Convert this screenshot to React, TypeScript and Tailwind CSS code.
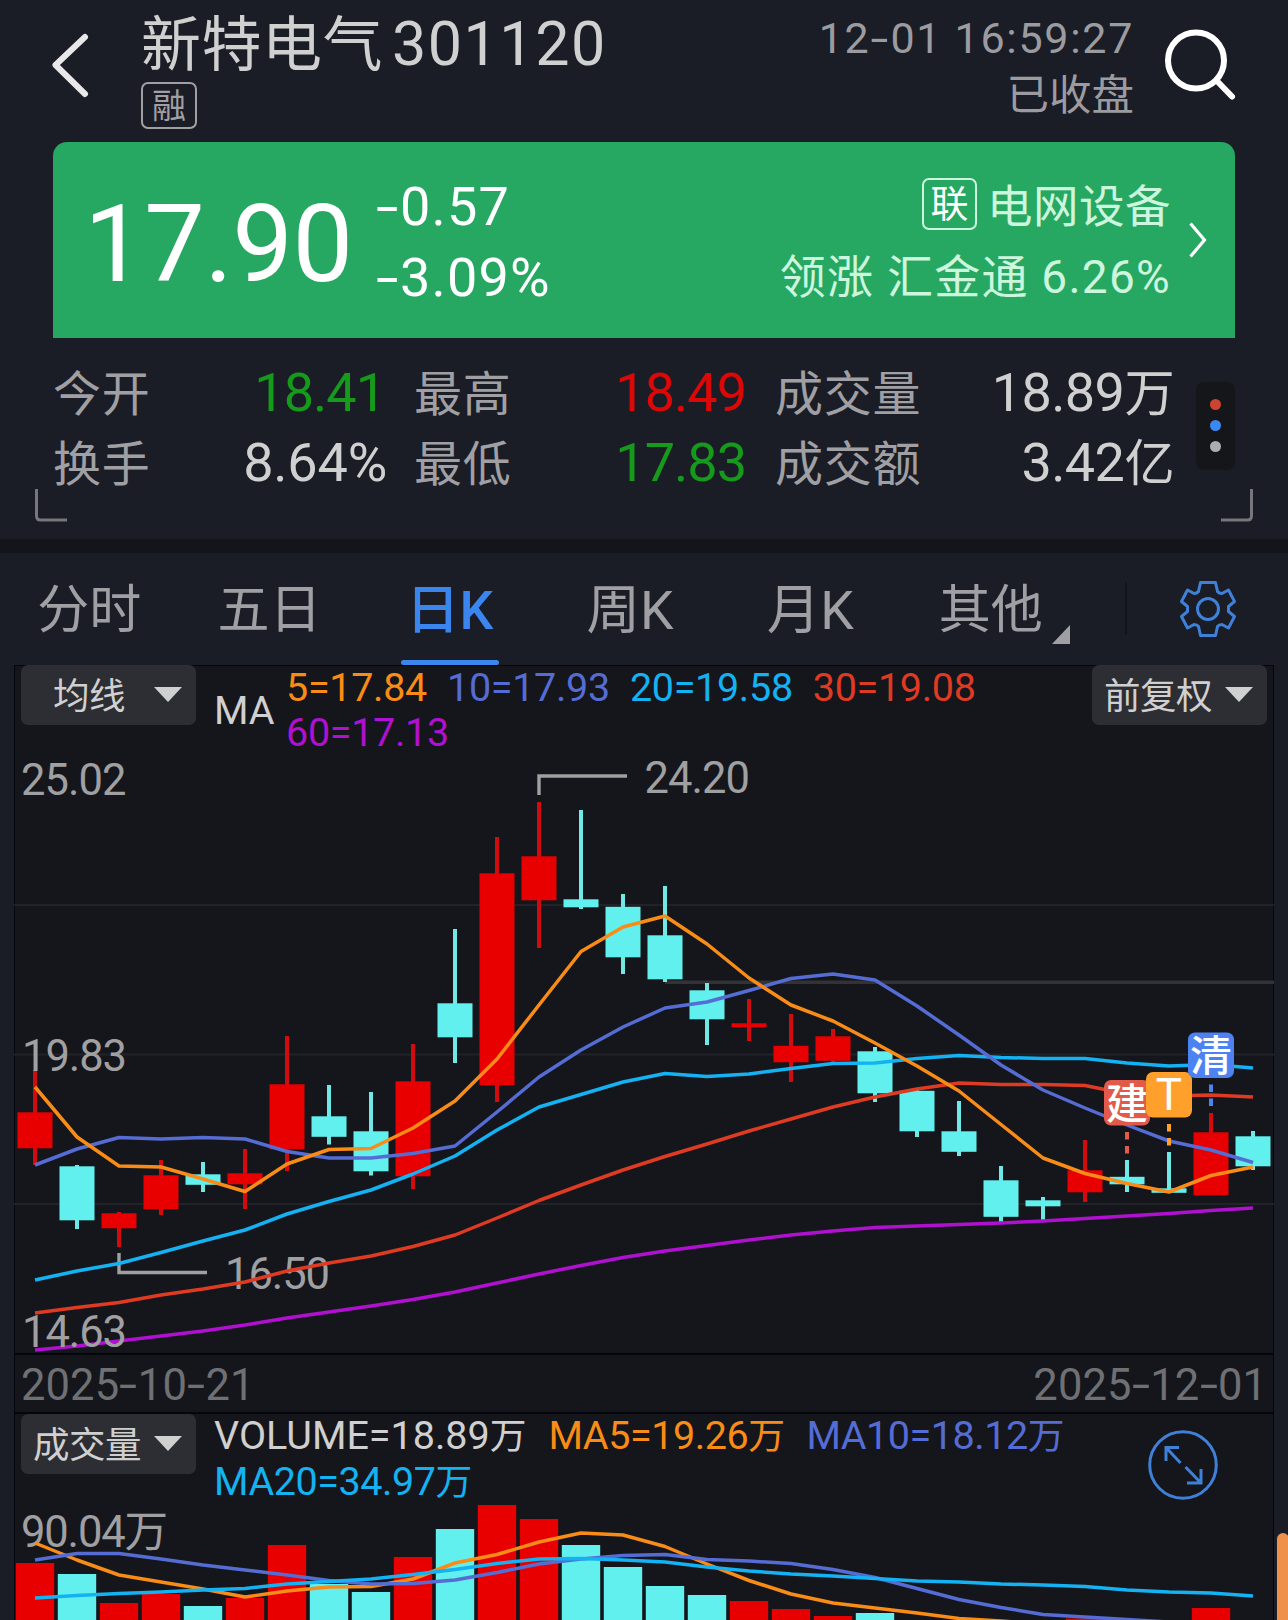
import React from "react";

type Candle = { up: boolean; high: number; top: number; bottom: number; low: number };

const c = (up: boolean, high: number, top: number, bottom: number, low: number): Candle => ({ up, high, top, bottom, low });

const RED = "#e80000";
const CYAN = "#62f0ee";

const candles: Candle[] = [
  c(true, 1070, 1112, 1148, 1165),
  c(false, 1165, 1166, 1220, 1229),
  c(true, 1212, 1213, 1228, 1247),
  c(true, 1160, 1175, 1209, 1215),
  c(false, 1162, 1174, 1184.5, 1192),
  c(true, 1149, 1173, 1184, 1209),
  c(true, 1036, 1084, 1149, 1171),
  c(false, 1085, 1116, 1136.5, 1144.5),
  c(false, 1092, 1131, 1171, 1175.5),
  c(true, 1044, 1081, 1176, 1189),
  c(false, 929, 1003, 1037, 1063),
  c(true, 837, 873, 1085, 1102),
  c(true, 802, 856, 900, 948),
  c(false, 810, 899, 907, 909),
  c(false, 894, 906.5, 957, 974),
  c(false, 886, 935, 979, 982),
  c(false, 983, 990, 1019, 1045),
  c(true, 999, 1023, 1027, 1041),
  c(true, 1014, 1045.5, 1062, 1082),
  c(true, 1029, 1036, 1060.5, 1063),
  c(false, 1047, 1051, 1093, 1102),
  c(false, 1090, 1090.5, 1131, 1137),
  c(false, 1101, 1131, 1151.5, 1156),
  c(false, 1166, 1180, 1216.5, 1222),
  c(false, 1197, 1200, 1206, 1220),
  c(true, 1140, 1170, 1192, 1202),
  c(false, 1160, 1176.5, 1184, 1192),
  c(false, 1152, 1188, 1192.5, 1192.5),
  c(true, 1113, 1132, 1195, 1195),
  c(false, 1131, 1136, 1166, 1170),
];

const ma5 = [1087, 1137, 1166, 1167, 1179, 1191.5, 1164, 1149.5, 1148.5, 1128, 1101, 1059, 1005, 951.5, 927, 916, 944, 978, 1005, 1021, 1043, 1066, 1091, 1124.5, 1158, 1173.5, 1183.5, 1192, 1175.5, 1167];
const ma10 = [1165, 1149, 1137.5, 1139, 1137.5, 1139, 1151.5, 1158, 1158, 1153.5, 1146, 1112, 1077, 1050, 1027, 1008, 1002, 990.5, 978.5, 974, 980, 1006, 1035, 1065, 1090, 1108, 1125, 1141, 1150, 1162.5];
const ma20 = [1280, 1271, 1263.5, 1252.5, 1241, 1230, 1214, 1201.5, 1190, 1174, 1156, 1130, 1107, 1094.5, 1082, 1073.5, 1076.5, 1074, 1068.5, 1063.5, 1063, 1058.5, 1055.5, 1057.5, 1058.5, 1058.5, 1063, 1066, 1064.5, 1068];
const ma30 = [1313, 1307.5, 1302.5, 1295, 1289, 1282, 1271, 1263, 1256, 1246.5, 1235, 1218, 1200.5, 1185, 1170, 1156.5, 1144, 1131, 1119, 1107, 1097, 1089, 1083, 1084.5, 1084.5, 1085.5, 1094, 1096, 1095, 1097];
const ma60 = [1350, 1346, 1341, 1336, 1331, 1325, 1318, 1312, 1306, 1299.5, 1292, 1283, 1274, 1265.5, 1257.5, 1251, 1245.5, 1240, 1235, 1231, 1227.5, 1226, 1224.5, 1223, 1221, 1218.5, 1216, 1213.5, 1210.5, 1208];

const volumeTops = [1563, 1574, 1603, 1594, 1606, 1598, 1545, 1584, 1592, 1557, 1529, 1505, 1519, 1545, 1567, 1586, 1595, 1601, 1609, 1616, 1613, 1622, 1622, 1622, 1622, 1618.5, 1622, 1622, 1608, 1622];
const vol5 = [1543, 1560, 1575, 1582, 1589, 1597, 1591, 1587, 1586.5, 1579, 1563, 1554.5, 1542, 1533, 1535, 1546.5, 1564, 1580.5, 1594, 1603, 1608, 1613, 1618.5, 1621, 1624];
const vol10 = [1560, 1553.5, 1553.5, 1559, 1565, 1570, 1575, 1580.5, 1584, 1583.5, 1580, 1572.5, 1564, 1559, 1555.5, 1554.5, 1559.5, 1561, 1563.5, 1569.5, 1577.5, 1588.5, 1599.5, 1607.5, 1614.5, 1617, 1619.5, 1622];
const vol20 = [1598, 1595.5, 1593.5, 1592, 1590, 1588.5, 1584, 1581.5, 1579, 1574.5, 1569.5, 1563.5, 1559, 1558.5, 1560, 1562, 1567, 1571, 1574, 1576, 1578.5, 1581, 1582, 1584, 1585, 1586.5, 1590, 1592, 1593, 1596];

const xAt = (i: number) => 35 + 42 * i;

function Line({ ys, color }: { ys: number[]; color: string }) {
  return <polyline points={ys.map((y, i) => `${xAt(i)},${y}`).join(" ")} fill="none" stroke={color} strokeWidth={3.5} strokeLinejoin="round" />;
}

function Label({ x, y, w, children, fill = "#a0a0a2", size = 43.5 }: { x: number; y: number; w: number; children: string; fill?: string; size?: number }) {
  return (
    <text x={x} y={y} textLength={w} lengthAdjust="spacing" fontSize={size} fill={fill}>
      {children}
    </text>
  );
}

function Marker({ x, y, color, text }: { x: number; y: number; color: string; text: string }) {
  return (
    <g>
      <rect x={x - 23} y={y} width={46} height={45.5} rx={7} fill={color} />
      <text x={x} y={text === "T" ? y + 38 : y + 38.5} textAnchor="middle" fontSize={text === "T" ? 44 : 42} fontWeight={text === "T" ? 400 : 500} fill="#fff">
        {text}
      </text>
      <path d={`M${x} ${y + 52}v7.5M${x} ${y + 66}v7.5`} stroke={color} strokeWidth={4} />
    </g>
  );
}

/* Digits with a wider dash than the typeface's own hyphen. */
function Dashed({ text }: { text: string }) {
  return (
    <>
      {text.split(/(-)/).map((part, i) =>
        part === "-" ? (
          <span key={i} className="mx-[0.075em] inline-block scale-x-150">-</span>
        ) : (
          part
        ),
      )}
    </>
  );
}

/* A figure whose trailing 万 or 亿 is set slightly smaller. */
function Amount({ text }: { text: string }) {
  const unit = /[万亿]$/.test(text) ? text.slice(-1) : "";
  return (
    <>
      {unit ? text.slice(0, -1) : text}
      {unit && <span className="text-[0.93em]">{unit}</span>}
    </>
  );
}

function PriceChart() {
  return (
    <svg className="block h-[598px] w-full overflow-visible" viewBox="15 755 1258 598" preserveAspectRatio="none">
      {[905, 1054.5, 1204].map((y) => (
        <path key={y} d={`M14 ${y}H1274`} stroke="#222328" strokeWidth={2} />
      ))}
      <path d="M665 982.300H1274" stroke="#333335" strokeWidth={3.4} />
      {candles.map((k, i) => (
        <g key={i} fill={k.up ? RED : CYAN}>
          <rect x={xAt(i) - 2} y={k.high} width={4} height={k.low - k.high} fill={k.up ? "#d00c0e" : "#70e8e6"} />
          <rect x={xAt(i) - 17.5} y={k.top + 0.3} width={35} height={k.bottom - k.top} />
        </g>
      ))}
      <path d="M539 795V776H627M119 1253V1272.5H207" fill="none" stroke="#a0a0a2" strokeWidth={3.4} />
      <Label x={644.5} y={793} w={105.5}>24.20</Label>
      <Label x={225} y={1289} w={105}>16.50</Label>
      <Line ys={ma60} color="#b010d0" />
      <Line ys={ma30} color="#df3a22" />
      <Line ys={ma20} color="#14b2f2" />
      <Line ys={ma10} color="#546cd4" />
      <Line ys={ma5} color="#f98c16" />
      <Label x={21} y={795} w={105.5}>25.02</Label>
      <Label x={22} y={1071} w={105}>19.83</Label>
      <Label x={22} y={1347} w={105}>14.63</Label>
      <Marker x={1127} y={1080} color="#e15a4a" text="建" />
      <Marker x={1169} y={1072} color="#ffa02d" text="T" />
      <Marker x={1211} y={1032.5} color="#4d82f3" text="清" />
    </svg>
  );
}

function VolumeChart() {
  return (
    <svg className="block h-[117px] w-full" viewBox="15 1503 1258 117" preserveAspectRatio="none">
      <Label x={21} y={1547} w={147}>90.04万</Label>
      {volumeTops.map((y, i) => (
        <rect key={i} x={xAt(i) - 19.2} y={y} width={38.4} height={Math.max(0, 1625 - y)} fill={candles[i].up ? RED : CYAN} />
      ))}
      <Line ys={vol5} color="#f98c16" />
      <Line ys={vol10} color="#546cd4" />
      <Line ys={vol20} color="#14b2f2" />
    </svg>
  );
}

function DropButton({ label }: { label: string }) {
  return (
    <button className="flex h-[60px] w-[175px] shrink-0 items-center justify-end rounded-[7px] bg-[#2d2e33] pr-[14px] text-[36.5px] leading-[56px] tracking-[-0.5px] text-[#d0d0d0]">
      <span className={label.length === 2 ? "mr-[29px] pt-[4px]" : "mr-[13px] pt-[4px]"}>{label}</span>
      <svg className="-mt-[2px] h-[15px] w-[28px]" viewBox="0 0 28 15"><path d="M0 0h28L14 15z" fill="#d0d0d0" /></svg>
    </button>
  );
}

function Stat({ label, value, color, width, valueClass = "tracking-[-1px]" }: { label: string; value: string; color: string; width: string; valueClass?: string }) {
  return (
    <div className={`flex h-[70px] items-baseline justify-between leading-[70px] ${width}`}>
      <span className="text-[48px] tracking-[0.7px] text-[#a0a0a4]">{label}</span>
      <span className={`text-[54px] ${color} ${valueClass}`}><Amount text={value} /></span>
    </div>
  );
}

const tabs = ["分时", "五日", "日K", "周K", "月K", "其他"];

export default function App() {
  return (
    <div className="relative h-[1620px] w-[1288px] overflow-hidden bg-[#1a1d26] font-['Roboto','Noto_Sans_CJK_SC',sans-serif] whitespace-nowrap">
      <header className="flex h-[142px] items-start pr-[50px] pl-[49px]">
        <svg className="mt-[30px] h-[70px] w-[42px]" viewBox="50 30 42 70">
          <path d="M86 37L56.500 65L86 94" fill="none" stroke="#e8e8e8" strokeWidth={6} strokeLinecap="round" strokeLinejoin="round" />
        </svg>
        <div className="mt-[14px] ml-[50px]">
          <h1 className="flex text-[60px] leading-[60px] text-[#d0d0d0]">
            <span className="pt-[2px] tracking-[0.500px]">新特电气</span>
            <span className="ml-[9px] text-[61px] tracking-[1.500px]">301120</span>
          </h1>
          <div className="mt-[6px] flex h-[47px] w-[56px] items-center justify-center rounded-[7px] border-2 border-[#a0a0a4] pt-px text-[34px] leading-[34px] text-[#a0a0a4]">融</div>
        </div>
        <div className="mt-[13px] ml-auto flex flex-col items-end text-[#9c9ca0]">
          <span className="text-[43px] leading-[50px] tracking-[1.700px]"><Dashed text="12-01 16:59:27" /></span>
          <span className="mt-[8px] text-[42.500px] leading-[50px]">已收盘</span>
        </div>
        <svg className="mt-[26px] ml-[28px] h-[78px] w-[76px]" viewBox="1162 26 76 78">
          <circle cx={1196} cy={60.500} r={28} fill="none" stroke="#fff" strokeWidth={6} />
          <path d="M1217 81L1232 96.500" stroke="#fff" strokeWidth={6} strokeLinecap="round" />
        </svg>
      </header>

      <section className="mx-[53px] flex h-[196px] rounded-t-[14px] bg-[#27a862] text-white">
        <span className="mt-[48px] ml-[31px] text-[108px] leading-[108px] tracking-[-0.500px]">17.90</span>
        <div className="mt-[29px] ml-[23px] flex flex-col text-[54px] leading-[71px] tracking-[1.200px]">
          <span><Dashed text="-0.57" /></span>
          <span><Dashed text="-3.09%" /></span>
        </div>
        <div className="mt-[29px] ml-auto flex flex-col items-end leading-[70px] text-[#cdf6de]">
          <div className="flex h-[70px] items-center">
            <span className="-mt-[4px] mr-[10px] flex h-[52px] w-[55px] items-center justify-center rounded-[7px] border-2 border-[#cdf6de] text-[38px] leading-[38px] text-white">联</span>
            <span className="pt-[3px] text-[45.500px] tracking-[0.500px]">电网设备</span>
          </div>
          <span className="pt-px text-[46px] tracking-[1.250px]">领涨 汇金通 6.26%</span>
        </div>
        <svg className="mt-[78px] mr-[27px] ml-[15px] h-[40px] w-[22px]" viewBox="1186.500 220 22 40">
          <path d="M1191 223.500L1205 240L1191 256.500" fill="none" stroke="#fff" strokeWidth={3.200} />
        </svg>
      </section>

      <section className="flex h-[201px] px-[35px]">
        <svg className="mt-[150px] h-[34px] w-[18px] shrink-0 overflow-visible" viewBox="0 0 18 34">
          <path d="M1.500 1V28Q1.500 32 5.500 32H32" fill="none" stroke="#77777b" strokeWidth={3} />
        </svg>
        <div className="mt-[20px]">
          <Stat label="今开" value="18.41" color="text-[#169a1b]" width="w-[332px]" />
          <Stat label="换手" value="8.64%" color="text-[#d0d0d0]" width="w-[334px]" valueClass="tracking-[-0.2px]" />
        </div>
        <div className="mt-[20px] ml-[27px]">
          <Stat label="最高" value="18.49" color="text-[#dc0808]" width="w-[332px]" />
          <Stat label="最低" value="17.83" color="text-[#169a1b]" width="w-[332px]" />
        </div>
        <div className="mt-[20px] ml-[29px]">
          <Stat label="成交量" value="18.89万" color="text-[#d0d0d0]" width="w-[399px]" valueClass="tracking-[-0.6px]" />
          <Stat label="成交额" value="3.42亿" color="text-[#d0d0d0]" width="w-[399px]" valueClass="tracking-[-0.6px]" />
        </div>
        <div className="mt-[44px] ml-auto flex h-[88px] w-[39px] shrink-0 flex-col items-center justify-center gap-[10px] rounded-[8px] bg-[#15161a] pb-px">
          <i className="h-[11px] w-[11px] rounded-full bg-[#c94533]" />
          <i className="h-[11px] w-[11px] rounded-full bg-[#3b88f5]" />
          <i className="h-[11px] w-[11px] rounded-full bg-[#adadb0]" />
        </div>
        <svg className="mt-[150px] h-[34px] w-[18px] shrink-0 overflow-visible" viewBox="0 0 18 34">
          <path d="M16.500 1V28Q16.500 32 12.500 32H-14" fill="none" stroke="#77777b" strokeWidth={3} />
        </svg>
      </section>

      <div className="h-[14px] bg-[#14151a]" />

      <nav className="flex h-[112px]">
        <div className="-ml-px flex">
          {tabs.map((t) => (
            <div key={t} className={`flex w-[180.3px] flex-col items-center pt-[28px] leading-[60px] ${t.endsWith("K") ? "text-[53.5px]" : "text-[52px]"} ${t === "日K" ? "text-[#3a86ee]" : "text-[#a0a0a4]"}`}>
              <span className={t === "日K" ? "font-medium" : ""}>{t}</span>
              {t === "日K" && <i className="mt-[19px] h-[5px] w-[98px] rounded-full bg-[#3a86ee]" />}
            </div>
          ))}
        </div>
        <svg className="mt-[72px] -ml-[29px] h-[19px] w-[18px]" viewBox="0 0 18 19"><path d="M18 0V19H0z" fill="#a0a0a4" /></svg>
        <i className="mt-[29px] ml-[55px] h-[53px] w-[2px] bg-[#14151a]" />
        <svg className="mt-[26px] ml-[51px] h-[60px] w-[60px]" viewBox="-30 -30 60 60" fill="none" stroke="#3f80d8" strokeWidth={3} strokeLinejoin="round">
          <path d="M-7.500 -26.500H7.500L9.500 -17.500Q11 -15.500 14 -15.500L20.500 -19L26.500 -7.500L20.500 -2.500V2.500L26.500 7.500L20.500 19L14 15.500Q11 15.500 9.500 17.500L7.500 26.500H-7.500L-9.500 17.500Q-11 15.500 -14 15.500L-20.500 19L-26.500 7.500L-20.500 2.500V-2.500L-26.500 -7.500L-20.500 -19L-14 -15.500Q-11 -15.500 -9.500 -17.500Z" />
          <circle r={10.500} />
        </svg>
      </nav>

      <main className="mr-[14px] ml-[14px] h-[955px] border-x border-[#05060c] bg-[#15161b]">
        <div className="flex h-[90px] border-t border-[#05060c] px-[6px]">
          <div className="-mt-px"><DropButton label="均线" /></div>
          <div className="-mt-px flex text-[39.5px] leading-[45px]">
            <span className="mt-[23px] ml-[18px] w-[72px] text-[#d0d0d0]">MA</span>
            <div className="flex flex-col tracking-[-0.300px]">
              <div className="flex gap-[20px]">
                <span className="text-[#f98c16]">5=17.84</span>
                <span className="text-[#546cd4]">10=17.93</span>
                <span className="text-[#14b2f2]">20=19.58</span>
                <span className="text-[#df3a22]">30=19.08</span>
              </div>
              <span className="text-[#b010d0]">60=17.13</span>
            </div>
          </div>
          <div className="-mt-px ml-auto"><DropButton label="前复权" /></div>
        </div>
        <PriceChart />
        <div className="flex h-[61px] items-center justify-between border-y-2 border-[#05060c] px-[6px] pt-[4px] text-[43.500px] leading-[52px] tracking-[0.100px] text-[#6f7074]">
          <span><Dashed text="2025-10-21" /></span>
          <span><Dashed text="2025-12-01" /></span>
        </div>
        <div className="flex h-[89px] pr-[55px] pl-[6px]">
          <DropButton label="成交量" />
          <div className="-mt-px ml-[18px] flex flex-col text-[39.5px] leading-[45px]">
            <div className="flex gap-[22px]">
              <span className="text-[#d0d0d0]"><Amount text="VOLUME=18.89万" /></span>
              <span className="tracking-[-0.45px] text-[#f98c16]"><Amount text="MA5=19.26万" /></span>
              <span className="tracking-[-0.45px] text-[#546cd4]"><Amount text="MA10=18.12万" /></span>
            </div>
            <span className="tracking-[-0.45px] text-[#14b2f2]"><Amount text="MA20=34.97万" /></span>
          </div>
          <svg className="mt-[16px] ml-auto h-[70px] w-[70px]" viewBox="1148 1430 70 70" fill="none" stroke="#3f80d8" strokeWidth={3}>
            <circle cx={1183} cy={1465} r={33.300} />
            <path d="M1180.500 1463L1166 1447.500M1179 1447.500H1166V1461M1185.500 1467L1201 1483M1187 1483H1201V1469" />
          </svg>
        </div>
        <VolumeChart />
      </main>

      <i className="absolute top-[1533px] left-[1277px] h-[100px] w-[12px] rounded-t-[6px] bg-[#f0914b]" />
    </div>
  );
}
